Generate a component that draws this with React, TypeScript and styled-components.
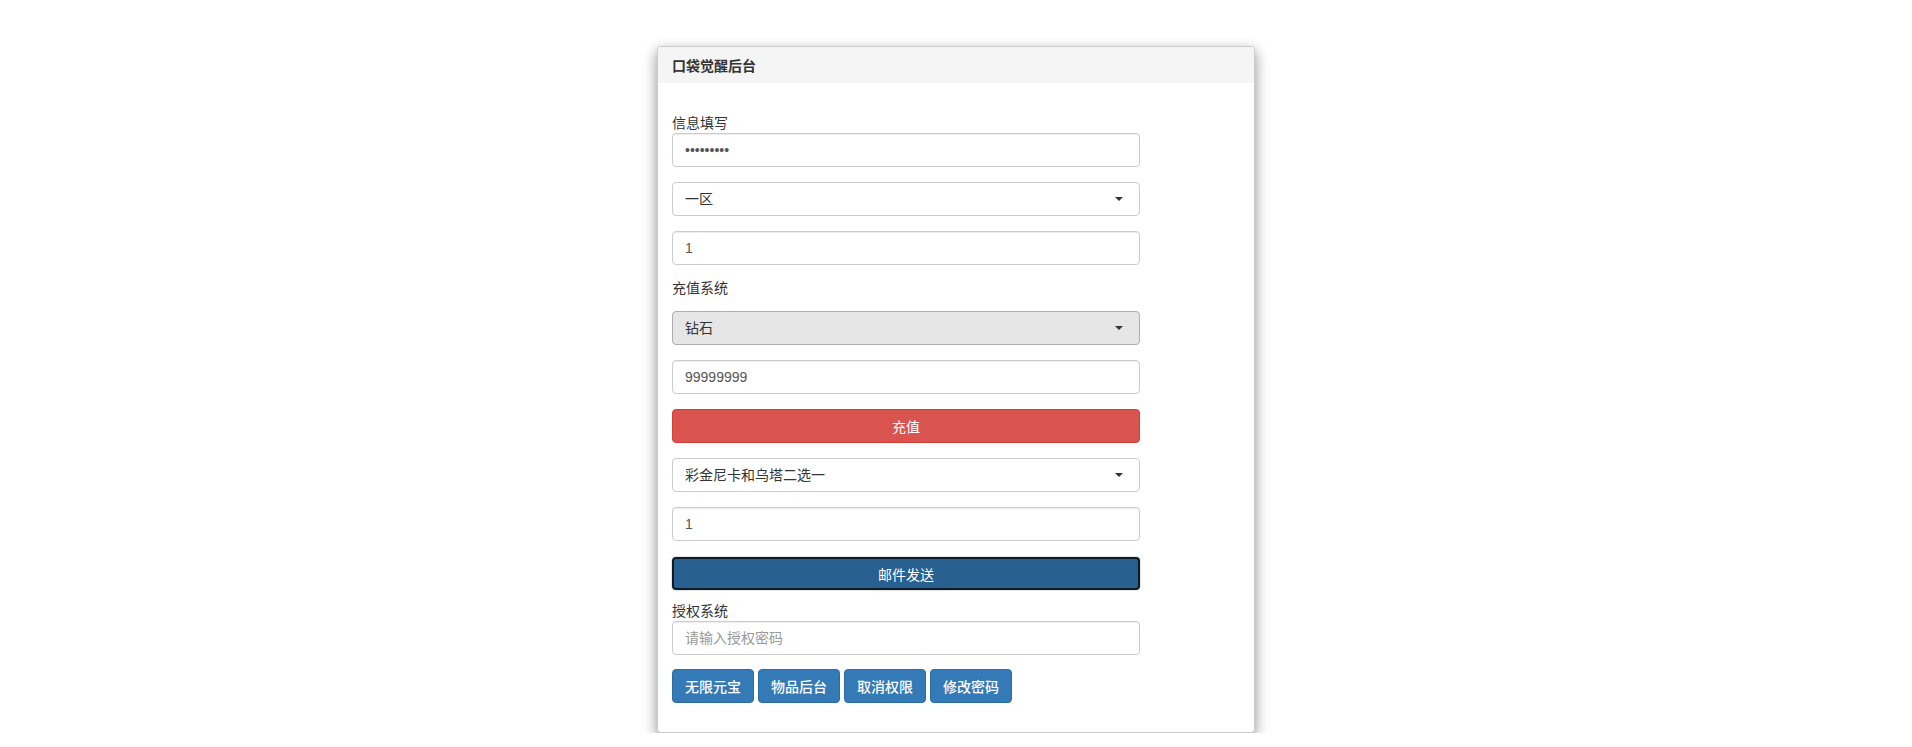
import React from 'react'
import styled, { createGlobalStyle } from 'styled-components'

const GlobalStyle = createGlobalStyle`
  * {
    box-sizing: border-box;
  }
  body {
    margin: 0;
    background: #fff;
    font-family: 'Liberation Sans', 'Noto Sans CJK SC', sans-serif;
    font-size: 14px;
    color: #333;
  }
`

const Panel = styled.div`
  width: 598px;
  margin: 46px 0 0 657px;
  border: 1px solid #ccc;
  border-radius: 4px;
  background: #fff;
  box-shadow: 0 5px 14px rgba(0, 0, 0, 0.45);
`

const PanelHeading = styled.div`
  height: 36px;
  padding: 0 14px;
  display: flex;
  align-items: center;
  background: #f5f5f5;
  border-radius: 3px 3px 0 0;
  font-weight: bold;
  font-size: 14px;
  color: #333;
`

const PanelBody = styled.div`
  padding: 30px 14px 29px;
`

const Form = styled.form`
  width: 468px;
  display: flex;
  flex-direction: column;
`

const Label = styled.label<{ $top?: number; $bottom?: number }>`
  display: block;
  line-height: 20px;
  font-size: 14px;
  color: #333;
  margin-top: ${(p) => p.$top ?? 0}px;
  margin-bottom: ${(p) => p.$bottom ?? 0}px;
`

const Input = styled.input<{ $top?: number }>`
  display: block;
  width: 100%;
  height: 34px;
  margin-top: ${(p) => p.$top ?? 0}px;
  padding: 6px 12px;
  border: 1px solid #ccc;
  border-radius: 4px;
  font-family: 'Liberation Sans', 'Noto Sans CJK SC', sans-serif;
  font-size: 14px;
  color: #555;
  background: #fff;
  box-shadow: inset 0 1px 1px rgba(0, 0, 0, 0.075);
  outline: none;

  &::placeholder {
    color: #999;
  }
`

const SelectBox = styled.div<{ $active?: boolean; $top?: number }>`
  display: flex;
  align-items: center;
  height: 34px;
  margin-top: ${(p) => p.$top ?? 0}px;
  padding: 0 16px 0 0;
  border: 1px solid ${(p) => (p.$active ? '#adadad' : '#ccc')};
  border-radius: 4px;
  background: ${(p) => (p.$active ? '#e6e6e6' : '#fff')};
`

const Select = styled.select`
  flex: 1;
  height: 100%;
  padding: 0 12px;
  border: none;
  background: transparent;
  appearance: none;
  font-family: 'Liberation Sans', 'Noto Sans CJK SC', sans-serif;
  font-size: 14px;
  color: #333;
  outline: none;
`

const Caret = styled.span`
  width: 0;
  height: 0;
  border-left: 4px solid transparent;
  border-right: 4px solid transparent;
  border-top: 4px solid #333;
`

const BlockButton = styled.button<{ $variant: 'danger' | 'primary'; $top?: number }>`
  display: block;
  width: 100%;
  height: ${(p) => (p.$variant === 'primary' ? 33 : 34)}px;
  margin-top: ${(p) => p.$top ?? 0}px;
  border-radius: 4px;
  font-family: 'Liberation Sans', 'Noto Sans CJK SC', sans-serif;
  font-size: 14px;
  color: #fff;
  cursor: pointer;
  background: ${(p) => (p.$variant === 'danger' ? '#d9534f' : '#286090')};
  border: ${(p) => (p.$variant === 'danger' ? '1px solid #d43f3a' : '2px solid #0d1b28')};
  box-shadow: ${(p) => (p.$variant === 'primary' ? '0 0 0 1px #e6e6e6' : 'none')};
`

const ButtonRow = styled.div`
  display: flex;
  gap: 4px;
  margin-top: 14px;
`

const SmallButton = styled.button`
  height: 34px;
  padding: 0 12px;
  border: 1px solid #2e6da4;
  border-radius: 4px;
  background: #337ab7;
  color: #fff;
  font-family: 'Liberation Sans', 'Noto Sans CJK SC', sans-serif;
  font-size: 14px;
  font-weight: 500;
  cursor: pointer;
`

export default function App() {
  return (
    <>
      <GlobalStyle />
      <Panel>
        <PanelHeading>口袋觉醒后台</PanelHeading>
        <PanelBody>
          <Form onSubmit={(e) => e.preventDefault()}>
            <Label>信息填写</Label>
            <Input type="password" defaultValue="123456789" />
            <SelectBox $top={15}>
              <Select defaultValue="1">
                <option value="1">一区</option>
                <option value="2">二区</option>
              </Select>
              <Caret />
            </SelectBox>
            <Input $top={15} defaultValue="1" />
            <Label $top={13} $bottom={13}>
              充值系统
            </Label>
            <SelectBox $active>
              <Select defaultValue="zs">
                <option value="zs">钻石</option>
                <option value="jb">金币</option>
              </Select>
              <Caret />
            </SelectBox>
            <Input $top={15} defaultValue="99999999" />
            <BlockButton type="button" $variant="danger" $top={15}>
              充值
            </BlockButton>
            <SelectBox $top={15}>
              <Select defaultValue="a">
                <option value="a">彩金尼卡和乌塔二选一</option>
              </Select>
              <Caret />
            </SelectBox>
            <Input $top={15} defaultValue="1" />
            <BlockButton type="button" $variant="primary" $top={16}>
              邮件发送
            </BlockButton>
            <Label $top={11}>授权系统</Label>
            <Input placeholder="请输入授权密码" />
            <ButtonRow>
              <SmallButton type="button">无限元宝</SmallButton>
              <SmallButton type="button">物品后台</SmallButton>
              <SmallButton type="button">取消权限</SmallButton>
              <SmallButton type="button">修改密码</SmallButton>
            </ButtonRow>
          </Form>
        </PanelBody>
      </Panel>
    </>
  )
}
